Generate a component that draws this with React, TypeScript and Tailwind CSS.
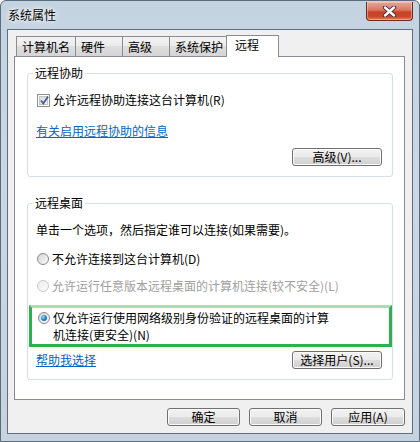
import React from 'react';

const btn =
  'h-[18px] rounded-[3px] border border-[#707070] bg-[linear-gradient(to_bottom,#f2f2f2_0%,#ebebeb_48%,#dddddd_52%,#cfcfcf_100%)] shadow-[inset_0_0_0_1px_#fbfbfb] text-[12px] leading-none text-black flex items-center justify-center';

function CloseButton() {
  return (
    <div className="mt-[1px] mr-[6px] w-[47px] h-[19px] rounded-b-[4px] border border-t-0 border-[#6b2b1f] bg-[linear-gradient(to_bottom,#e9a595_0%,#d9775f_45%,#c8432a_55%,#c8462c_80%,#e0805f_100%)] shadow-[inset_0_0_0_1px_rgba(255,220,210,0.45)] flex items-center justify-center">
      <svg width="15" height="11" viewBox="0 0 15 11">
        <path d="M3 1.5 L12 9.5 M12 1.5 L3 9.5" stroke="#3c2a2a" strokeWidth="4.2" strokeLinecap="round" />
        <path d="M3 1.5 L12 9.5 M12 1.5 L3 9.5" stroke="#ffffff" strokeWidth="2.4" strokeLinecap="round" />
      </svg>
    </div>
  );
}

function Checkbox() {
  return (
    <div className="w-[13px] h-[13px] border border-[#8e8f8f] bg-white p-[1px] shrink-0">
      <div className="w-full h-full border border-[#c4c4c4] bg-[linear-gradient(to_bottom_right,#d9d9d9,#f7f7f7)] relative">
        <svg width="11" height="11" viewBox="0 0 11 11" className="absolute -left-[1px] -top-[2px]">
          <path d="M2 5.5 L4.3 8.5 L9 1.5" stroke="#4a5a9c" strokeWidth="1.8" fill="none" />
        </svg>
      </div>
    </div>
  );
}

function Radio({ checked, disabled }: { checked?: boolean; disabled?: boolean }) {
  return (
    <div
      className={`w-[12px] h-[12px] rounded-full border shrink-0 flex items-center justify-center ${
        disabled
          ? 'border-[#c9c9c9] bg-[linear-gradient(to_bottom_right,#ececec,#fbfbfb)]'
          : 'border-[#8a8a8a] bg-[linear-gradient(to_bottom_right,#d5d5d5,#fafafa)]'
      }`}
    >
      {checked && (
        <div className="w-[6px] h-[6px] rounded-full bg-[radial-gradient(circle_at_35%_35%,#a6dcf7_0%,#2a8ad4_45%,#0e4f8f_100%)]" />
      )}
    </div>
  );
}

export default function App() {
  const tabs = [
    { label: '计算机名', w: 'w-[60px]' },
    { label: '硬件', w: 'w-[48px]' },
    { label: '高级', w: 'w-[48px]' },
    { label: '系统保护', w: 'w-[58px]' },
  ];

  return (
    <div className="w-[420px] h-[442px] flex flex-col rounded-t-[6px] border border-[#5b6c7d] bg-[linear-gradient(to_bottom,#c4d3e0_0%,#cbd7e2_40%,#c6d3df_100%)] font-['SimSun','Noto_Sans_CJK_SC',sans-serif] text-[12px] text-black">
      {/* title bar */}
      <div className="h-[28px] flex justify-between items-start shrink-0">
        <div className="pl-[7px] pt-[7px] leading-[14px] [text-shadow:0_0_6px_#ffffff,0_0_3px_#ffffff]">系统属性</div>
        <CloseButton />
      </div>

      {/* client area */}
      <div className="mx-[6px] mb-[7px] flex-1 border border-[#5f6f80] bg-[#f0f0f0] flex flex-col">
        <div className="pt-[5px] pl-[8px] h-[26px] flex items-end shrink-0">
          {tabs.map((t) => (
            <div
              key={t.label}
              className={`${t.w} h-[20px] border border-b-0 border-[#898c95] -ml-[1px] first:ml-0 bg-[linear-gradient(to_bottom,#f3f3f3_0%,#ebebeb_50%,#dedede_50%,#d5d5d5_100%)] pl-[5px] leading-[19px]`}
            >
              {t.label}
            </div>
          ))}
          <div className="w-[53px] h-[22px] -ml-[1px] border border-b-0 border-[#898c95] bg-white pl-[8px] leading-[18px] relative top-[1px] z-10">
            远程
          </div>
        </div>

        <div className="ml-[6px] mr-[7px] h-[344px] border border-[#898c95] bg-white pt-[9px] pl-[12px] pr-[11px] shrink-0">
          {/* remote assistance */}
          <fieldset className="border border-[#d5dfe5] rounded-[3px] pb-[10px]">
            <legend className="ml-[5px] px-[2px] leading-[14px]">远程协助</legend>
            <div className="mt-[13px] pl-[9px] flex items-center gap-[3px] leading-[14px]">
              <Checkbox />
              <span>允许远程协助连接这台计算机(R)</span>
            </div>
            <div className="mt-[17px] pl-[8px] leading-[14px]">
              <span className="text-[#0066cc] underline">有关启用远程协助的信息</span>
            </div>
            <div className="mt-[10px] pr-[10px] flex justify-end">
              <div className={`${btn} w-[90px]`}>高级(V)...</div>
            </div>
          </fieldset>

          {/* remote desktop */}
          <fieldset className="mt-[19px] border border-[#d5dfe5] rounded-[3px] pb-[10px]">
            <legend className="ml-[5px] px-[2px] leading-[14px]">远程桌面</legend>
            <div className="mt-[13px] pl-[8px] leading-[14px]">单击一个选项，然后指定谁可以连接(如果需要)。</div>
            <div className="mt-[15px] pl-[9px] flex items-center gap-[3px] leading-[14px]">
              <Radio />
              <span>不允许连接到这台计算机(D)</span>
            </div>
            <div className="mt-[13px] pl-[9px] flex items-center gap-[3px] leading-[14px] text-[#a0a0a0]">
              <Radio disabled />
              <span>允许运行任意版本远程桌面的计算机连接(较不安全)(L)</span>
            </div>
            <div className="mt-[12px] ml-[1px] h-[42px] border-[3px] border-[#2cb24d] border-t-[#a5dfb5] pl-[6px] pt-[1px] flex items-start gap-[3px]">
              <div className="mt-[3px]">
                <Radio checked />
              </div>
              <div className="leading-[17px]">
                仅允许运行使用网络级别身份验证的远程桌面的计算
                <br />
                机连接(更安全)(N)
              </div>
            </div>
            <div className="mt-[4px] pl-[8px] pr-[10px] flex items-center justify-between">
              <span className="text-[#0066cc] underline leading-[14px]">帮助我选择</span>
              <div className={`${btn} w-[90px]`}>选择用户(S)...</div>
            </div>
          </fieldset>
        </div>

        <div className="mt-[8px] pr-[7px] flex justify-end gap-[9px]">
          <div className={`${btn} w-[73px] border-[#3c7fb1] shadow-[inset_0_0_0_1px_#a9dcf5]`}>确定</div>
          <div className={`${btn} w-[73px]`}>取消</div>
          <div className={`${btn} w-[74px]`}>应用(A)</div>
        </div>
      </div>
    </div>
  );
}
